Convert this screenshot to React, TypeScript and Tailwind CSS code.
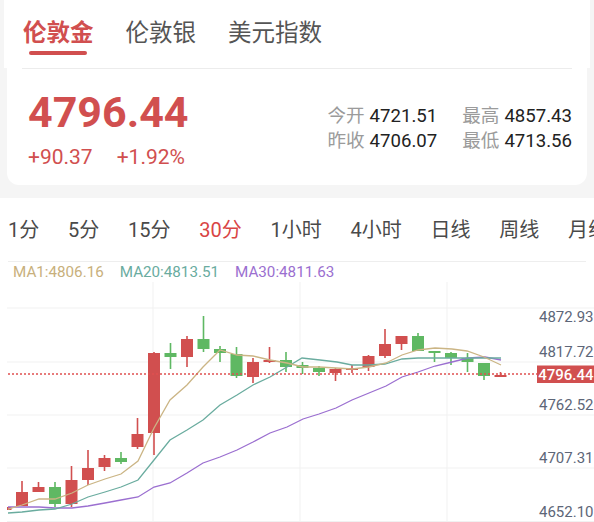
import React from "react";

const metalTabs = ["伦敦金", "伦敦银", "美元指数"];
const periods = ["1分", "5分", "15分", "30分", "1小时", "4小时", "日线", "周线", "月线"];

// [up?, bodyTop, bodyBottom, wickTop, wickBottom] in page pixels
const candles: [boolean, number, number, number, number][] = [
  [true, 507, 510, 507, 510],
  [true, 492, 506, 481, 506],
  [true, 487, 492, 482, 492],
  [false, 487, 504, 482, 507],
  [true, 480, 504, 466, 507],
  [true, 468, 480, 450, 485],
  [true, 458, 467, 455, 471],
  [false, 458, 462, 452, 464],
  [true, 434, 447, 418, 449],
  [true, 353, 433, 352, 455],
  [false, 353, 357, 343, 369],
  [true, 339, 357, 336, 367],
  [false, 339, 349, 316, 352],
  [false, 349, 353, 346, 362],
  [false, 354, 376, 347, 378],
  [true, 362, 377, 358, 383],
  [true, 360, 362, 347, 363],
  [false, 360, 367, 352, 372],
  [false, 365, 368, 362, 374],
  [false, 368, 372, 366, 376],
  [true, 369, 373, 368, 381],
  [true, 368, 370, 365, 373],
  [true, 356, 367, 355, 371],
  [true, 344, 356, 329, 358],
  [true, 336, 344, 336, 350],
  [false, 336, 351, 333, 351],
  [false, 351, 353, 351, 362],
  [false, 353, 358, 352, 365],
  [false, 358, 362, 353, 372],
  [false, 363, 376, 363, 380],
  [true, 375, 377, 372, 377],
];

const ma1 =
  "8,509 22,505 39,499 55,499 72,493 88,485 105,479 121,474 138,461 154,428 170,400 187,385 203,367 220,350 237,355 253,356 270,360 287,363 303,367 319,367 336,368 352,369 369,367 386,363 402,355 418,350 435,348 452,349 467,351 484,357 501,365";
const ma20 =
  "8,513 22,512 39,510 55,509 72,504 88,497 105,492 121,487 138,480 154,460 170,440 187,430 203,420 220,405 237,395 253,385 270,377 287,367 302,358 320,360 337,362 352,365 368,365 385,364 402,359 418,358 435,358 452,358 468,358 485,358 501,358";
const ma30 =
  "8,507 39,507 55,508 72,508 88,506 105,503 121,500 138,497 154,487 170,483 187,473 203,463 220,457 237,450 253,442 270,433 287,427 303,419 319,414 336,408 352,400 369,393 386,386 402,377 418,372 435,366 452,362 468,358 485,357 501,360";

const axis: [string, number][] = [
  ["4872.93", 317],
  ["4817.72", 352],
  ["4762.52", 405],
  ["4707.31", 458],
  ["4652.10", 512],
];

function Stat({ label, value }: { label: string; value: string }) {
  return (
    <div className="flex items-center gap-[5px] leading-[25px]">
      <span className="text-[#9b9b9b]">{label}</span>
      <span className="text-[#222]">{value}</span>
    </div>
  );
}

function Chart() {
  return (
    <svg width={594} height={240} viewBox="0 282 594 240" className="block">
      <defs>
        <clipPath id="plot">
          <rect x={7} y={282} width={530} height={240} />
        </clipPath>
      </defs>
      {[308, 362, 415, 468, 521.5].map((y) => (
        <line key={y} x1={7} x2={594} y1={y} y2={y} stroke="#f1f1f1" strokeWidth={1} />
      ))}
      {[153, 300, 447].map((x) => (
        <line key={x} x1={x} x2={x} y1={282} y2={522} stroke="#f1f1f1" strokeWidth={1} />
      ))}
      <g clipPath="url(#plot)">
        {candles.map(([up, bt, bb, wt, wb], i) => {
          const cx = 5.5 + 16.5 * i;
          const c = up ? "#d14f4f" : "#5fb863";
          return (
            <g key={i}>
              <rect x={cx - 0.8} y={wt} width={1.6} height={Math.max(wb - wt, 1)} fill={c} />
              <rect x={cx - 6} y={bt} width={12} height={Math.max(bb - bt, 1.6)} fill={c} />
            </g>
          );
        })}
        <polyline points={ma30} fill="none" stroke="#9b6fd0" strokeWidth={1.3} />
        <polyline points={ma20} fill="none" stroke="#6aac9f" strokeWidth={1.3} />
        <polyline points={ma1} fill="none" stroke="#cbb585" strokeWidth={1.3} />
      </g>
      <line x1={8} x2={537} y1={374} y2={374} stroke="#e05050" strokeWidth={1.3} strokeDasharray="2 2" />
      {axis.map(([t, y]) => (
        <text
          key={t}
          x={593.5}
          y={y + 5.3}
          textAnchor="end"
          fontSize={15}
          fill="#5d6678"
          fontFamily="Roboto, sans-serif"
        >
          {t}
        </text>
      ))}
      <rect x={537} y={365.5} width={57} height={17.5} fill="#d14f4f" />
      <text x={593.5} y={379.5} textAnchor="end" fontSize={15} fontWeight={500} fill="#fff" fontFamily="Roboto, sans-serif">
        4796.44
      </text>
    </svg>
  );
}

export default function App() {
  return (
    <div className="h-[522px] w-[594px] overflow-hidden bg-[#f5f5f5] font-['Roboto','Noto_Sans_CJK_SC',sans-serif]">
      <div className="mx-[4px] flex h-[68px] items-start gap-[32px] bg-white pl-[19px] pt-[19px]">
        {metalTabs.map((t, i) => (
          <div key={t} className="flex flex-col items-center">
            <span
              className={
                i === 0
                  ? "text-[23.5px] leading-[28px] font-bold text-[#d14f4f]"
                  : "text-[23.5px] leading-[28px] text-[#555]"
              }
            >
              {t}
            </span>
            {i === 0 && <span className="mt-[4px] h-[3.5px] w-[58px] rounded-full bg-[#d14f4f]" />}
          </div>
        ))}
      </div>

      <div className="mx-[7px] h-[117px] rounded-b-[12px] bg-white">
        <div className="mx-[15px] border-t border-[#ececec]" />
        <div className="flex items-start justify-between">
          <div className="pl-[21px] pt-[22px] text-[#d14f4f]">
            <div className="text-[43px] leading-none font-bold">4796.44</div>
            <div className="mt-[13px] flex gap-[24px] text-[21px] leading-[21px]">
              <span>+90.37</span>
              <span>+1.92%</span>
            </div>
          </div>
          <div className="grid grid-cols-[auto_auto] content-start gap-x-[25px] pr-[15px] pt-[35px] text-[18.6px]">
            <Stat label="今开" value="4721.51" />
            <Stat label="最高" value="4857.43" />
            <Stat label="昨收" value="4706.07" />
            <Stat label="最低" value="4713.56" />
          </div>
        </div>
      </div>

      <div className="mt-[13px] h-[324px] bg-white">
        <div className="mx-[8px] flex h-[64px] items-center gap-[28.75px] whitespace-nowrap border-b border-[#eeeeee] text-[20px]">
          {periods.map((p) => (
            <span key={p} className={p === "30分" ? "text-[#d94545]" : "text-[#4a4a4a]"}>
              {p}
            </span>
          ))}
        </div>
        <div className="flex h-[20px] items-center gap-[16px] pl-[13px] text-[15.2px]">
          <span className="text-[#c8b07c]">MA1:4806.16</span>
          <span className="text-[#6aac9f]">MA20:4813.51</span>
          <span className="text-[#9b6fd0]">MA30:4811.63</span>
        </div>
        <Chart />
      </div>
    </div>
  );
}
